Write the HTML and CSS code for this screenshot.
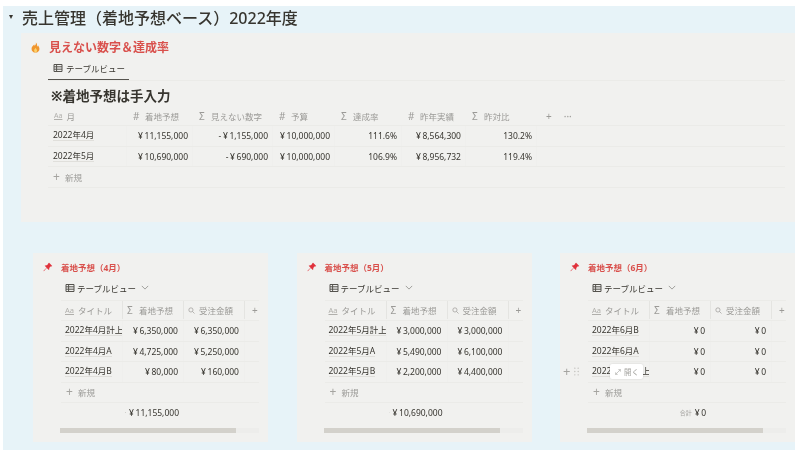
FILE: index.html
```html
<!DOCTYPE html>
<html lang="ja">
<head>
  <meta charset="UTF-8">
  <meta name="viewport" content="width=device-width, initial-scale=1.0">
  <title>売上管理（着地予想ベース）2022年度</title>
  <link rel="stylesheet" href="styles.css">
</head>
<body>
  <div class="page">
    <h1 class="page-title"><span class="toggle"></span>売上管理（着地予想ベース）2022年度</h1>

    <!-- 見えない数字 -->
    <div class="callout">
      <div class="callout-title">
        <svg class="flame" viewBox="0 0 12 12"><path d="M6.4.6c.4 1.9-.5 2.7-1.3 3.6-.3-.5-.4-.9-.4-1.400C3 4 1.700 5.500 1.700 7.500c0 2.300 1.900 4 4.300 4s4.300-1.700 4.300-4C10.300 5.800 9.300 5 9 3.800c-.4.600-.7.900-1.100 1.100C7.900 3.200 7.600 1.600 6.400.6z" fill="#f0962e"/><path d="M6 6.200c-.2 1-1.500 1.500-1.500 3 0 1.100.7 2 1.600 2s1.600-.8 1.600-1.900C7.700 8 6.600 7.500 6 6.200z" fill="#fbd36b"/></svg>
        見えない数字＆達成率
      </div>
      <div class="tabs">
        <div class="tab">
          <svg class="table-icon" viewBox="0 0 10 10"><path d="M1 1.500h8v7H1zM1 3.800h8M1 6.200h8M3.600 1.500v7" fill="none" stroke="currentColor" stroke-width="1"/></svg>
          テーブルビュー
        </div>
      </div>
      <h2 class="table-heading">※着地予想は手入力</h2>

      <div class="main-table">
        <div class="main-row head">
          <div class="cell"><span class="aa">Aa</span>月</div>
          <div class="cell"><span class="prop">#</span>着地予想</div>
          <div class="cell"><span class="prop">Σ</span>見えない数字</div>
          <div class="cell"><span class="prop">#</span>予算</div>
          <div class="cell"><span class="prop">Σ</span>達成率</div>
          <div class="cell"><span class="prop">#</span>昨年実績</div>
          <div class="cell"><span class="prop">Σ</span>昨対比</div>
          <div class="cell head-tools"><span>+</span><span>···</span></div>
        </div>
        <div class="main-row">
          <div class="cell"><span class="row-title">2022年4月</span></div>
          <div class="cell num">¥ 11,155,000</div>
          <div class="cell num">- ¥ 1,155,000</div>
          <div class="cell num">¥ 10,000,000</div>
          <div class="cell num">111.6%</div>
          <div class="cell num">¥ 8,564,300</div>
          <div class="cell num">130.2%</div>
        </div>
        <div class="main-row">
          <div class="cell"><span class="row-title">2022年5月</span></div>
          <div class="cell num">¥ 10,690,000</div>
          <div class="cell num">- ¥ 690,000</div>
          <div class="cell num">¥ 10,000,000</div>
          <div class="cell num">106.9%</div>
          <div class="cell num">¥ 8,956,732</div>
          <div class="cell num">119.4%</div>
        </div>
        <div class="new-row"><span class="plus">+</span>新規</div>
      </div>
    </div>

    <div class="cards">
      <!-- 4月 -->
      <div class="card">
        <div class="card-title">
          <svg class="pin" viewBox="0 0 12 12"><path d="M7.300.9l3.800 3.800-1 .8-.7-.3-1.900 1.900c.3 1 .1 1.900-.5 2.500L4.500 7.200 1 11l-.4-.4 3.700-3.600L2 4.500c.7-.6 1.600-.8 2.600-.5l1.800-1.900-.2-.6z" fill="#e0323c"/></svg>
          着地予想（4月）
        </div>
        <div class="view-name">
          <svg class="table-icon" viewBox="0 0 10 10"><path d="M1 1.500h8v7H1zM1 3.800h8M1 6.200h8M3.600 1.500v7" fill="none" stroke="currentColor" stroke-width="1"/></svg>
          テーブルビュー
          <svg class="chevron" viewBox="0 0 10 6"><path d="M1 1l4 4 4-4" fill="none" stroke="currentColor" stroke-width="1"/></svg>
        </div>
        <div class="card-row head">
          <div class="cell"><span class="aa">Aa</span>タイトル</div>
          <div class="cell"><span class="prop">Σ</span>着地予想</div>
          <div class="cell"><svg class="search" viewBox="0 0 10 10"><circle cx="4.200" cy="4.200" r="3" fill="none" stroke="currentColor"/><path d="M6.500 6.500L9.300 9.300" stroke="currentColor"/></svg>受注金額</div>
          <div class="cell add">+</div>
        </div>
        <div class="card-row">
          <div class="cell"><span class="row-title">2022年4月計上</span></div>
          <div class="cell num">¥ 6,350,000</div>
          <div class="cell num">¥ 6,350,000</div>
        </div>
        <div class="card-row">
          <div class="cell"><span class="row-title">2022年4月A</span></div>
          <div class="cell num">¥ 4,725,000</div>
          <div class="cell num">¥ 5,250,000</div>
        </div>
        <div class="card-row">
          <div class="cell"><span class="row-title">2022年4月B</span></div>
          <div class="cell num">¥ 80,000</div>
          <div class="cell num">¥ 160,000</div>
        </div>
        <div class="new-row"><span class="plus">+</span>新規</div>
        <div class="sum-row">
          <div class="sum-cell"><span class="sum-label">合計</span>¥ 11,155,000</div>
        </div>
        <div class="scrollbar"><div class="thumb"></div></div>
      </div>

      <!-- 5月 -->
      <div class="card">
        <div class="card-title">
          <svg class="pin" viewBox="0 0 12 12"><path d="M7.300.9l3.800 3.800-1 .8-.7-.3-1.900 1.900c.3 1 .1 1.900-.5 2.500L4.500 7.200 1 11l-.4-.4 3.700-3.600L2 4.500c.7-.6 1.600-.8 2.600-.5l1.800-1.900-.2-.6z" fill="#e0323c"/></svg>
          着地予想（5月）
        </div>
        <div class="view-name">
          <svg class="table-icon" viewBox="0 0 10 10"><path d="M1 1.500h8v7H1zM1 3.800h8M1 6.200h8M3.600 1.500v7" fill="none" stroke="currentColor" stroke-width="1"/></svg>
          テーブルビュー
          <svg class="chevron" viewBox="0 0 10 6"><path d="M1 1l4 4 4-4" fill="none" stroke="currentColor" stroke-width="1"/></svg>
        </div>
        <div class="card-row head">
          <div class="cell"><span class="aa">Aa</span>タイトル</div>
          <div class="cell"><span class="prop">Σ</span>着地予想</div>
          <div class="cell"><svg class="search" viewBox="0 0 10 10"><circle cx="4.200" cy="4.200" r="3" fill="none" stroke="currentColor"/><path d="M6.500 6.500L9.300 9.300" stroke="currentColor"/></svg>受注金額</div>
          <div class="cell add">+</div>
        </div>
        <div class="card-row">
          <div class="cell"><span class="row-title">2022年5月計上</span></div>
          <div class="cell num">¥ 3,000,000</div>
          <div class="cell num">¥ 3,000,000</div>
        </div>
        <div class="card-row">
          <div class="cell"><span class="row-title">2022年5月A</span></div>
          <div class="cell num">¥ 5,490,000</div>
          <div class="cell num">¥ 6,100,000</div>
        </div>
        <div class="card-row">
          <div class="cell"><span class="row-title">2022年5月B</span></div>
          <div class="cell num">¥ 2,200,000</div>
          <div class="cell num">¥ 4,400,000</div>
        </div>
        <div class="new-row"><span class="plus">+</span>新規</div>
        <div class="sum-row">
          <div class="sum-cell"><span class="sum-label">合計</span>¥ 10,690,000</div>
        </div>
        <div class="scrollbar"><div class="thumb"></div></div>
      </div>

      <!-- 6月 -->
      <div class="card">
        <div class="card-title">
          <svg class="pin" viewBox="0 0 12 12"><path d="M7.300.9l3.800 3.800-1 .8-.7-.3-1.900 1.900c.3 1 .1 1.900-.5 2.500L4.500 7.200 1 11l-.4-.4 3.700-3.600L2 4.500c.7-.6 1.600-.8 2.600-.5l1.800-1.900-.2-.6z" fill="#e0323c"/></svg>
          着地予想（6月）
        </div>
        <div class="view-name">
          <svg class="table-icon" viewBox="0 0 10 10"><path d="M1 1.500h8v7H1zM1 3.800h8M1 6.200h8M3.600 1.500v7" fill="none" stroke="currentColor" stroke-width="1"/></svg>
          テーブルビュー
          <svg class="chevron" viewBox="0 0 10 6"><path d="M1 1l4 4 4-4" fill="none" stroke="currentColor" stroke-width="1"/></svg>
        </div>
        <div class="card-row head">
          <div class="cell"><span class="aa">Aa</span>タイトル</div>
          <div class="cell"><span class="prop">Σ</span>着地予想</div>
          <div class="cell"><svg class="search" viewBox="0 0 10 10"><circle cx="4.200" cy="4.200" r="3" fill="none" stroke="currentColor"/><path d="M6.500 6.500L9.300 9.300" stroke="currentColor"/></svg>受注金額</div>
          <div class="cell add">+</div>
        </div>
        <div class="card-row">
          <div class="cell"><span class="row-title">2022年6月B</span></div>
          <div class="cell num">¥ 0</div>
          <div class="cell num">¥ 0</div>
        </div>
        <div class="card-row">
          <div class="cell"><span class="row-title">2022年6月A</span></div>
          <div class="cell num">¥ 0</div>
          <div class="cell num">¥ 0</div>
        </div>
        <div class="card-row hovered">
          <div class="row-tools">
            <span class="plus">+</span>
            <svg class="drag" viewBox="0 0 6 10"><g fill="currentColor"><circle cx="1" cy="1" r=".8"/><circle cx="5" cy="1" r=".8"/><circle cx="1" cy="5" r=".8"/><circle cx="5" cy="5" r=".8"/><circle cx="1" cy="9" r=".8"/><circle cx="5" cy="9" r=".8"/></g></svg>
          </div>
          <div class="cell"><span class="row-title">2022年6月計上</span></div>
          <div class="cell num">¥ 0</div>
          <div class="cell num">¥ 0</div>
          <div class="open-btn">
            <svg class="expand" viewBox="0 0 10 10"><path d="M1 9l8-8M5.500 1H9v3.500M1 5.500V9h3.500" fill="none" stroke="currentColor"/></svg>
            開く
          </div>
        </div>
        <div class="new-row"><span class="plus">+</span>新規</div>
        <div class="sum-row">
          <div class="sum-cell"><span class="sum-label">合計</span>¥ 0</div>
        </div>
        <div class="scrollbar"><div class="thumb"></div></div>
      </div>
    </div>
  </div>
</body>
</html>
```

FILE: styles.css
```css
html, body {
  margin: 0;
  background-color: white;
  overflow: hidden;
}

body {
  font-family: 'Noto Sans', 'Noto Sans CJK JP', sans-serif;
  color: #37352f;
  font-size: 8.5px;
  filter: blur(0.45px);
}

.page {
  margin: 6px 5px 0 3px;
  height: 444px;
  background-color: #e7f3f8;
  overflow: hidden;
}

.page-title {
  display: flex;
  align-items: center;
  height: 27px;
  padding-bottom: 5px;
  box-sizing: border-box;
  margin: 0;
  font-size: 16px;
  font-weight: 500;
  color: #37352f;
}

.toggle {
  width: 0;
  height: 0;
  margin: 0 9px 0 6px;
  border-left: 2.5px solid transparent;
  border-right: 2.5px solid transparent;
  border-top: 4px solid #37352f;
}

.callout {
  margin-left: 18px;
  height: 189px;
  padding: 6px 10px 0 9px;
  box-sizing: border-box;
  background-color: #f1f1ef;
}

.callout-title {
  display: flex;
  align-items: center;
  gap: 8px;
  height: 15px;
  font-size: 12px;
  font-weight: 700;
  color: #d9504c;
}

.flame {
  width: 11px;
  height: 11px;
  margin-top: 2px;
}

.tabs {
  margin: 5px 0 0 18px;
  height: 21px;
  border-bottom: 1px solid #ebebe8;
}

.tab {
  display: flex;
  align-items: center;
  gap: 3px;
  width: 81px;
  height: 21px;
  padding: 0 0 2px 5px;
  box-sizing: border-box;
  border-bottom: 1px solid #55534e;
}

.table-icon {
  width: 10px;
  height: 10px;
  color: #55534e;
}

.table-heading {
  margin: 6px 0 0 21px;
  height: 19px;
  line-height: 19px;
  font-size: 13.500px;
  font-weight: 700;
  color: #37352f;
}

.main-table {
  margin: 0 0 0 18px;
}

.main-row {
  display: grid;
  grid-template-columns: 79px 66px 80px 62px 67px 64px 71px 50px;
  height: 20.5px;
  box-sizing: border-box;
  border-bottom: 1px solid #ebebe8;
}

.main-row.head {
  height: 20px;
}

.cell {
  display: flex;
  align-items: center;
  padding: 0 4px 0 5px;
  white-space: nowrap;
  overflow: hidden;
  border-right: 1px solid #efefed;
}

.head .cell {
  color: #9b9a97;
}

.main-row.head .cell {
  padding-left: 6px;
  border-right: none;
}

.num {
  justify-content: flex-end;
  word-spacing: -0.6px;
}

.head-tools {
  gap: 12px;
  font-size: 10px;
  margin-left: 3px;
}

.aa {
  margin-right: 4px;
  font-size: 7px;
  color: #b0afab;
  text-decoration: underline;
}

.prop {
  width: 12px;
  font-size: 10px;
  color: #9b9a97;
}

.row-title {
  border-bottom: 1px solid #e0dfdb;
  line-height: 10px;
}

.new-row {
  display: flex;
  align-items: center;
  height: 20.500px;
  padding-left: 5px;
  box-sizing: border-box;
  color: #9b9a97;
  border-bottom: 1px solid #ebebe8;
}

.plus {
  margin-right: 5px;
  font-size: 12px;
  line-height: 10px;
  color: #a5a4a0;
}

.cards {
  display: flex;
  gap: 28.500px;
  margin: 31px 0 0 30px;
}

.card {
  flex: 0 0 235px;
  height: 189px;
  padding: 7px 9px 0 28px;
  box-sizing: border-box;
  background-color: #f1f1ef;
}

.card-title {
  position: relative;
  display: flex;
  align-items: center;
  height: 14px;
  font-size: 8.500px;
  font-weight: 700;
  color: #d9504c;
}

.pin {
  position: absolute;
  left: -18px;
  top: 2px;
  width: 10px;
  height: 10px;
}

.view-name {
  display: flex;
  align-items: center;
  gap: 2px;
  height: 26px;
  padding: 1px 0 0 4px;
  box-sizing: border-box;
  font-size: 8.500px;
}

.chevron {
  width: 8px;
  height: 5px;
  margin-left: 3px;
  color: #8c8b87;
}

.card-row {
  position: relative;
  display: grid;
  grid-template-columns: 62px 61px 61px 14px;
  height: 20.500px;
  box-sizing: border-box;
  border-bottom: 1px solid #ebebe8;
}

.card-row.head {
  height: 21px;
  padding-bottom: 1px;
  border-top: 1px solid #ebebe8;
}

.card-row.head .cell {
  border-right: 1px solid #e4e4e1;
}

.card-row.head .cell.add {
  border-right: none;
  padding: 0 0 0 7px;
  font-size: 10px;
}

.card-row .cell {
  padding: 0 5px 0 4px;
}

.card-row.head .cell:first-child {
  padding-left: 4px;
}

.card-row .aa {
  font-size: 7.500px;
}

.search {
  flex: none;
  width: 7px;
  height: 7px;
  margin-right: 4px;
  color: #9b9a97;
}

.row-tools {
  position: absolute;
  left: -25px;
  top: 4px;
  display: flex;
  align-items: center;
  gap: 4px;
  color: #bdbcb8;
}

.row-tools .plus {
  margin: 0;
  font-size: 13px;
}

.drag {
  width: 5px;
  height: 9px;
}

.open-btn {
  position: absolute;
  left: 22px;
  top: 2px;
  display: flex;
  align-items: center;
  gap: 3px;
  width: 33px;
  height: 15px;
  padding-left: 5px;
  box-sizing: border-box;
  background-color: white;
  border-radius: 2px;
  color: #a5a4a0;
  font-size: 7.500px;
  box-shadow: 0 0 2px rgba(15, 15, 15, 0.15);
}

.expand {
  width: 6px;
  height: 6px;
}

.sum-row {
  display: grid;
  grid-template-columns: 62px 61px;
  height: 18px;
}

.sum-cell {
  grid-column: 2;
  display: flex;
  justify-content: flex-end;
  align-items: center;
  gap: 3px;
  margin-left: 2px;
  padding-right: 5px;
  overflow: hidden;
  white-space: nowrap;
  word-spacing: -0.6px;
  font-size: 8.500px;
}

.sum-label {
  flex: none;
  font-size: 6px;
  color: #a5a4a0;
}

.scrollbar {
  height: 5px;
  margin: 7px 0 0 -1px;
  background-color: #ededeb;
}

.thumb {
  width: 176px;
  height: 5px;
  background-color: #d3d1cb;
}
```
